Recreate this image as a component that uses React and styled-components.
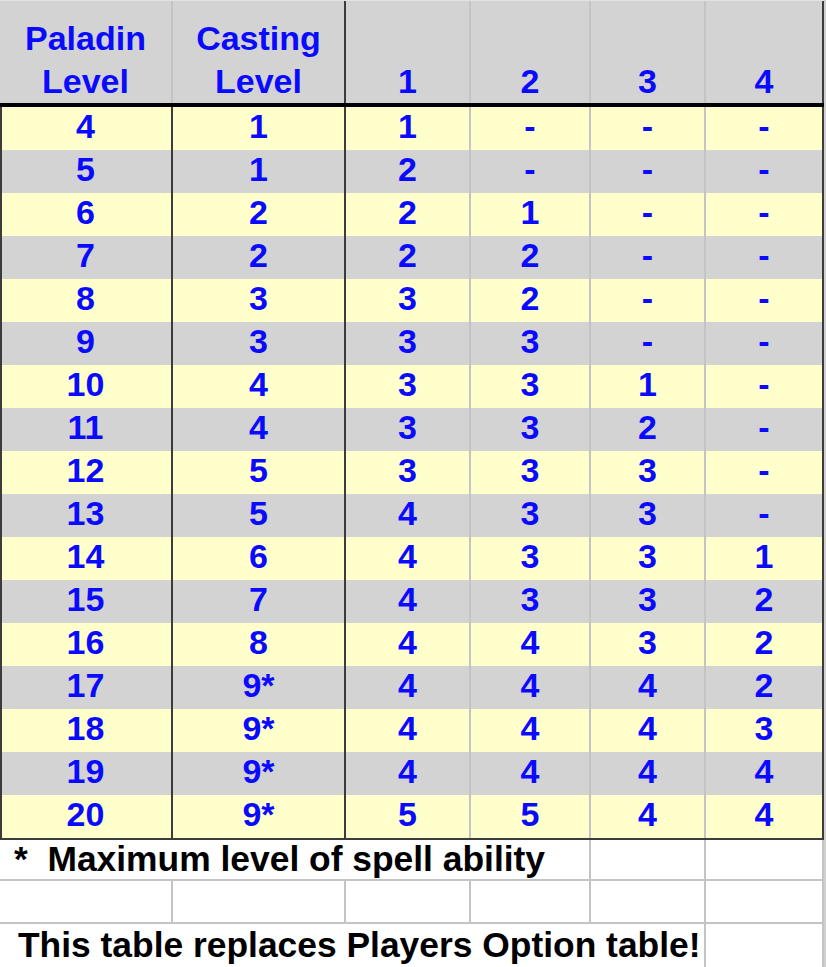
import React from "react";
import styled, { createGlobalStyle, css } from "styled-components";

const Global = createGlobalStyle`
  html, body { margin: 0; padding: 0; background: #ffffff; }
  body { font-family: "Liberation Sans", Arial, sans-serif; }
`;

const DARK = "#3c3c3c";
const LIGHT = "#c4c4c4";
const COLS = "173px 173px 125px 120px 115px 118px";

const Sheet = styled.div`
  width: 824px;
  border-right: 2px solid #d0d0d0;
  display: flex;
  flex-direction: column;
`;

const HeaderRow = styled.div`
  display: grid;
  grid-template-columns: ${COLS};
  height: 107px;
  box-sizing: border-box;
  background: #d3d3d3;
  border-top: 1px solid #e2e2e2;
  border-bottom: 4px solid #000000;
`;

const DataBody = styled.div`
  display: flex;
  flex-direction: column;
  border-bottom: 2px solid ${DARK};
`;

const DataRow = styled.div`
  display: grid;
  grid-template-columns: ${COLS};
  height: 43px;
  background: ${(p) => (p.$alt ? "#d3d3d3" : "#ffffcc")};
`;

const cellBase = css`
  box-sizing: border-box;
  border-right: 2px solid ${(p) => (p.$line === "dark" ? DARK : LIGHT)};
  display: flex;
  justify-content: center;
  color: #0a0aff;
  font-weight: 700;
  font-size: 34px;
`;

const HeadCell = styled.div`
  ${cellBase};
  flex-direction: column;
  justify-content: flex-end;
  align-items: center;
  line-height: 43px;
  padding-bottom: 0;
`;

const Cell = styled.div`
  ${cellBase};
  align-items: flex-start;
  line-height: 38px;
  ${(p) => p.$first && css`box-shadow: inset 2px 0 0 ${DARK};`}
`;

const FootRow = styled.div`
  display: grid;
  grid-template-columns: ${COLS};
  height: ${(p) => p.$h}px;
  box-sizing: border-box;
  border-bottom: ${(p) => (p.$last ? "none" : `2px solid ${LIGHT}`)};
`;

const FootCell = styled.div`
  box-sizing: border-box;
  grid-column: span ${(p) => p.$span || 1};
  border-right: 2px solid ${LIGHT};
  color: #000000;
  font-weight: 700;
  font-size: 35.4px;
  line-height: ${(p) => p.$lh || 41}px;
  white-space: pre;
  padding-left: ${(p) => p.$pad || 0}px;
  overflow: visible;
`;

const headLines = ["light", "dark", "light", "light", "light", "dark"];
const dataLines = ["dark", "dark", "light", "light", "light", "dark"];

const headers = [["Paladin", "Level"], ["Casting", "Level"], ["1"], ["2"], ["3"], ["4"]];

const rows = [
  ["4", "1", "1", "-", "-", "-"],
  ["5", "1", "2", "-", "-", "-"],
  ["6", "2", "2", "1", "-", "-"],
  ["7", "2", "2", "2", "-", "-"],
  ["8", "3", "3", "2", "-", "-"],
  ["9", "3", "3", "3", "-", "-"],
  ["10", "4", "3", "3", "1", "-"],
  ["11", "4", "3", "3", "2", "-"],
  ["12", "5", "3", "3", "3", "-"],
  ["13", "5", "4", "3", "3", "-"],
  ["14", "6", "4", "3", "3", "1"],
  ["15", "7", "4", "3", "3", "2"],
  ["16", "8", "4", "4", "3", "2"],
  ["17", "9*", "4", "4", "4", "2"],
  ["18", "9*", "4", "4", "4", "3"],
  ["19", "9*", "4", "4", "4", "4"],
  ["20", "9*", "5", "5", "4", "4"],
];

export default function App() {
  return (
    <>
      <Global />
      <Sheet>
        <HeaderRow>
          {headers.map((lines, i) => (
            <HeadCell key={i} $line={headLines[i]}>
              {lines.map((l) => (
                <span key={l}>{l}</span>
              ))}
            </HeadCell>
          ))}
        </HeaderRow>
        <DataBody>
          {rows.map((r, ri) => (
            <DataRow key={ri} $alt={ri % 2 === 1}>
              {r.map((v, ci) => (
                <Cell key={ci} $line={dataLines[ci]} $first={ci === 0}>
                  {v}
                </Cell>
              ))}
            </DataRow>
          ))}
        </DataBody>
        <FootRow $h={41}>
          <FootCell $span={4} $pad={14} $lh={39}>{"*  Maximum level of spell ability"}</FootCell>
          <FootCell />
          <FootCell />
        </FootRow>
        <FootRow $h={43}>
          <FootCell />
          <FootCell />
          <FootCell />
          <FootCell />
          <FootCell />
          <FootCell />
        </FootRow>
        <FootRow $h={43} $last>
          <FootCell $span={5} $pad={18} $lh={43}>{"This table replaces Players Option table!"}</FootCell>
          <FootCell />
        </FootRow>
      </Sheet>
    </>
  );
}
